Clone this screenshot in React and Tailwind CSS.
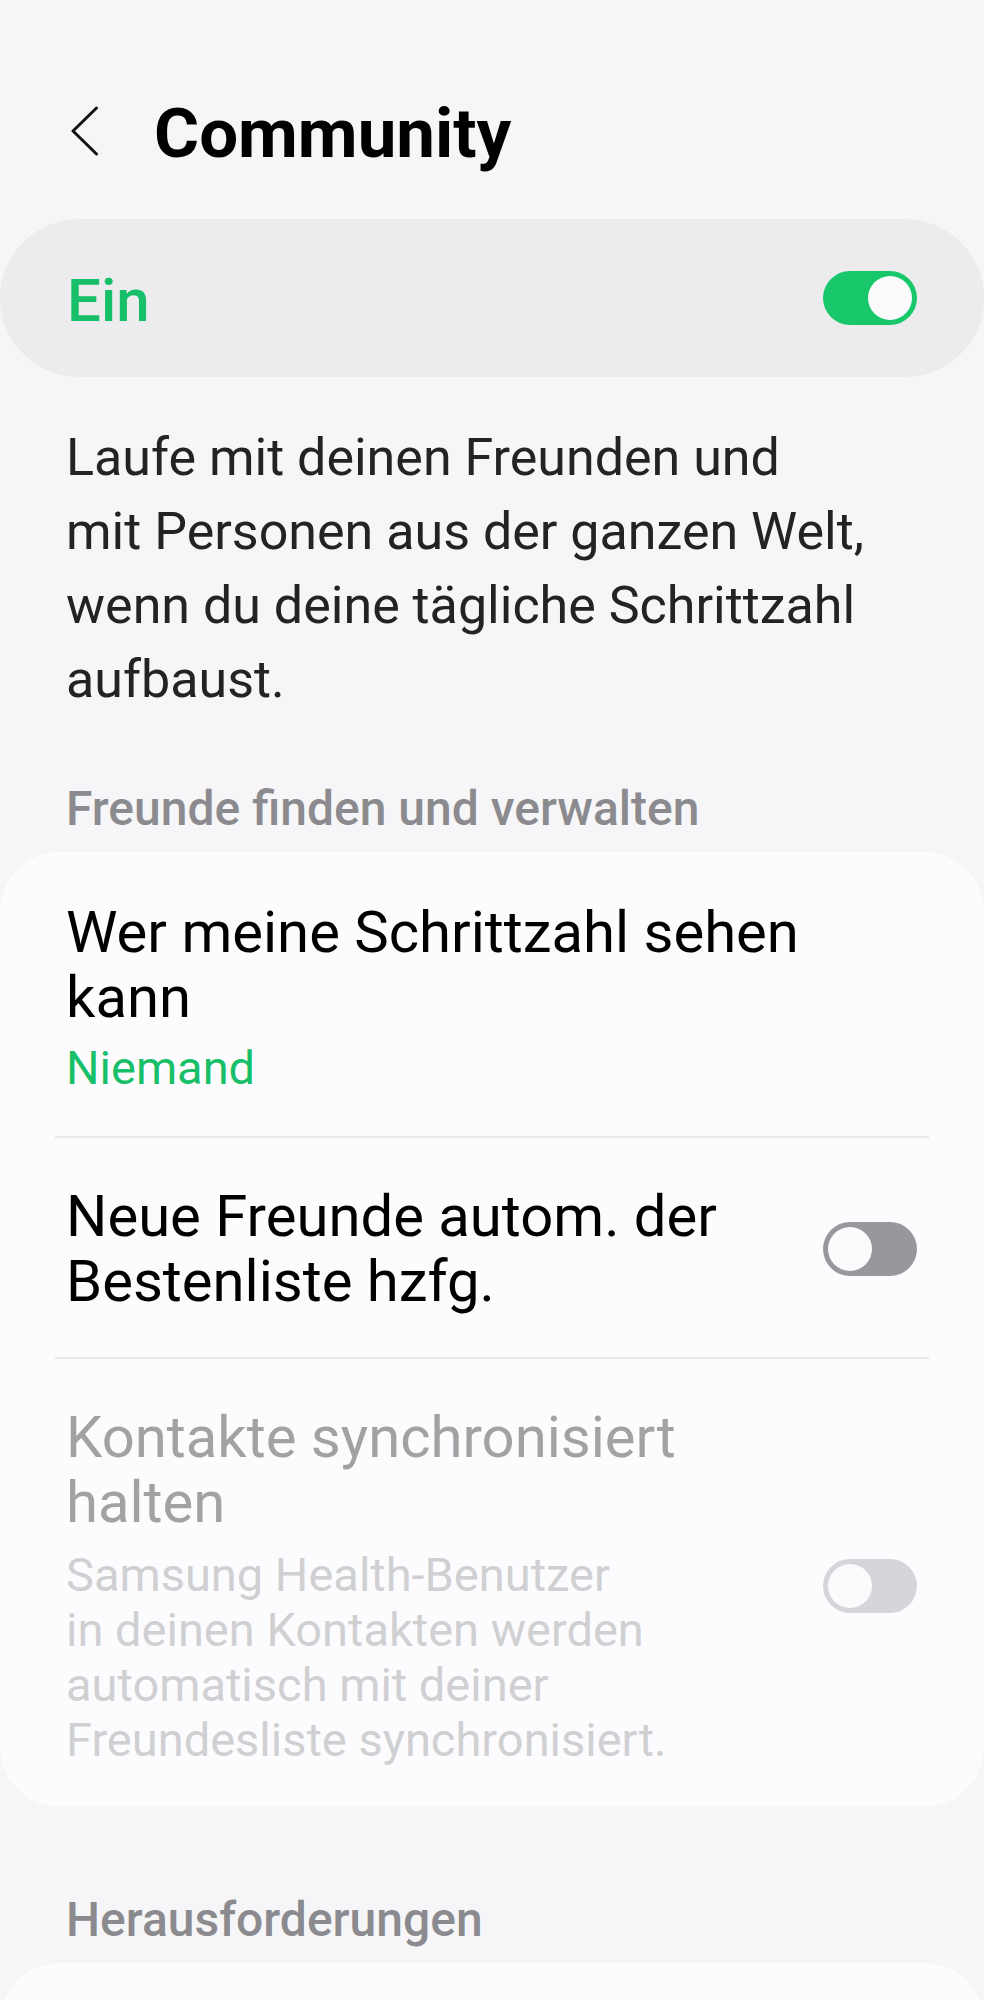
import React, { useState } from "react";

const Toggle = ({ on, disabled, onClick }) => {
  const track = on
    ? "bg-[#17c76a]"
    : disabled
    ? "bg-[#d6d6da]"
    : "bg-[#98989c]";
  return (
    <button
      onClick={onClick}
      disabled={disabled}
      className={`relative shrink-0 w-[94px] h-[54px] rounded-full ${track}`}
    >
      <span
        className={`absolute top-[5px] w-[44px] h-[44px] rounded-full bg-[#fbfbfd] ${
          on ? "left-[45px]" : "left-[5px]"
        }`}
      />
    </button>
  );
};

const Divider = () => <div className="mx-[55px] h-[2px] bg-[#e8e8ea]" />;

const App = () => {
  const [community, setCommunity] = useState(true);
  const [autoAdd, setAutoAdd] = useState(false);

  return (
    <div className="min-h-[2000px] bg-[#f6f6f8] font-['Roboto',sans-serif] overflow-hidden">
      {/* Header */}
      <header className="flex items-center pt-[94px] pl-[71px]">
        <svg
          viewBox="0 0 28 50"
          className="w-[28px] h-[50px] mb-[6px]"
          fill="none"
          stroke="#111"
          strokeWidth="3"
          strokeLinecap="round"
          strokeLinejoin="round"
        >
          <polyline points="25.5,2 2,25 25.5,48" />
        </svg>
        <h1 className="ml-[55px] text-[69px] leading-[80px] font-bold text-black">
          Community
        </h1>
      </header>

      {/* Main switch */}
      <div className="mt-[45px] h-[158px] rounded-full bg-[#ececee] flex items-center justify-between pl-[67px] pr-[67px]">
        <span className="pt-[6px] text-[60px] leading-[70px] font-medium text-[#17bf68]">
          {community ? "Ein" : "Aus"}
        </span>
        <Toggle on={community} onClick={() => setCommunity(!community)} />
      </div>

      <p className="mt-[44px] px-[66px] text-[52px] leading-[74px] text-[#232323]">
        Laufe mit deinen Freunden und
        <br />
        mit Personen aus der ganzen Welt,
        <br />
        wenn du deine tägliche Schrittzahl
        <br />
        aufbaust.
      </p>

      {/* Freunde */}
      <h2 className="mt-[64px] px-[66px] text-[48px] leading-[56px] font-medium text-[#8b8b8f]">
        Freunde finden und verwalten
      </h2>
      <div className="mt-[15px] rounded-[60px] bg-[#fcfcfe]">
        <div className="pt-[48px] pb-[41px] px-[66px]">
          <div className="text-[58px] leading-[65px] text-black">
            Wer meine Schrittzahl sehen
            <br />
            kann
          </div>
          <div className="mt-[10px] text-[47px] leading-[55px] text-[#17bf68]">
            Niemand
          </div>
        </div>
        <Divider />
        <div className="flex items-center justify-between pt-[46px] pb-[43px] pl-[66px] pr-[67px]">
          <div className="text-[58px] leading-[65px] text-black">
            Neue Freunde autom. der
            <br />
            Bestenliste hzfg.
          </div>
          <Toggle on={autoAdd} onClick={() => setAutoAdd(!autoAdd)} />
        </div>
        <Divider />
        <div className="flex items-center justify-between pt-[46px] pb-[40px] pl-[66px] pr-[67px]">
          <div>
            <div className="text-[58px] leading-[65px] text-[#a2a2a5]">
              Kontakte synchronisiert
              <br />
              halten
            </div>
            <div className="mt-[12px] text-[47px] leading-[55px] text-[#d0d0d3]">
              Samsung Health-Benutzer
              <br />
              in deinen Kontakten werden
              <br />
              automatisch mit deiner
              <br />
              Freundesliste synchronisiert.
            </div>
          </div>
          <Toggle on={false} disabled />
        </div>
      </div>

      {/* Herausforderungen */}
      <h2 className="mt-[85px] px-[66px] text-[48px] leading-[56px] font-medium text-[#8b8b8f]">
        Herausforderungen
      </h2>
      <div className="mt-[15px] h-[200px] rounded-[60px] bg-[#fcfcfe]" />
    </div>
  );
};

export default App;
